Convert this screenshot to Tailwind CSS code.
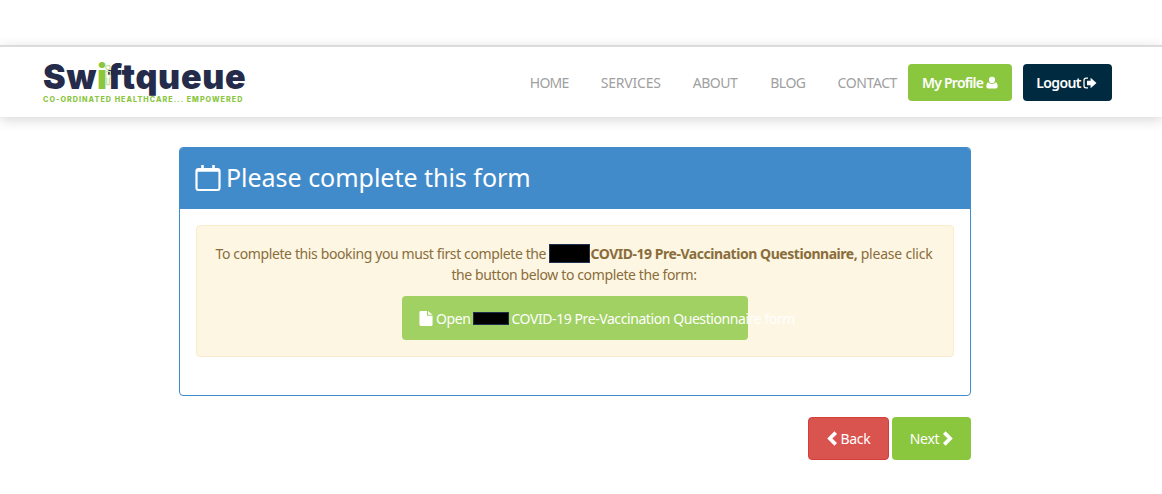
<!doctype html>
<html><head><meta charset="utf-8"><script src="https://cdn.jsdelivr.net/npm/@tailwindcss/browser@4"></script></head>
<body class="bg-white font-['Noto_Sans',sans-serif] w-[1162px] h-[494px] overflow-hidden">
<div class="h-[45px]"></div>
<header class="h-[72px] border-t-2 border-[#dcdcdf] bg-white shadow-[0_3px_12px_rgba(0,0,0,0.16)] flex items-center pl-[43px] pr-[50px] relative">
  <div class="w-[204px] shrink-0 mt-[1px]">
    <div class="flex items-baseline h-[33px] text-[#252b4a] font-['Inter',sans-serif] font-black text-[34px] leading-[33px] tracking-[0.75px]"><span>Sw</span><span class="relative text-[#8bc63f]">i<svg viewBox="0 0 8 24" class="absolute left-[8px] top-[3px] w-[7px] h-[24px]" fill="none" stroke="#c5e3a0" stroke-width="1.400"><circle cx="3.500" cy="3.500" r="2.500"/><path d="M1 8h5v8H5v7H2v-7H1z"/></svg></span><span>ftqueue</span></div>
    <div class="text-[#8bc63f] font-['Inter',sans-serif] font-extrabold text-[7.2px] leading-[10px] tracking-[1.03px] whitespace-nowrap mt-[2px]">CO-ORDINATED HEALTHCARE... EMPOWERED</div>
  </div>
  <nav class="ml-auto flex items-center text-[14px] text-[#a0a0a0] font-['Noto_Sans',sans-serif] tracking-[-0.5px] mt-[1px]">
    <a class="mr-[32px] tracking-[-0.7px]">HOME</a><a class="mr-[32px] tracking-[-0.2px]">SERVICES</a><a class="mr-[33px]">ABOUT</a><a class="mr-[32px]">BLOG</a><a class="mr-[11px] tracking-[-0.4px]">CONTACT</a>
    <a class="w-[104px] h-[37px] rounded-[4px] bg-[#8bc63f] text-white font-semibold flex items-center justify-center gap-[3px] tracking-[-0.75px]">My Profile
      <svg viewBox="0 0 14 14" class="w-[12px] h-[13px]" fill="#fff"><circle cx="7" cy="4" r="3.600"/><path d="M2.600 6.800C3.600 8 5.200 8.600 7 8.600s3.400-.6 4.400-1.800C13 7.200 13.600 9.400 13.600 11.800c0 1.400-.9 2.200-2.200 2.200H2.600C1.300 14 .4 13.200.4 11.800c0-2.400.6-4.600 2.200-5z"/></svg></a>
    <a class="ml-[11px] w-[89px] h-[37px] pr-[2px] rounded-[4px] bg-[#002a40] text-white font-semibold flex items-center justify-center gap-[2px] tracking-[-0.6px]">Logout
      <svg viewBox="0 0 14 12" class="w-[14px] h-[12px]"><path d="M5 1.200H3A2 2 0 0 0 1 3.200v5.600a2 2 0 0 0 2 2h2" fill="none" stroke="#fff" stroke-width="1.300"/><path d="M7.600.8 13.500 6 7.600 11.200V8.300H4V3.700h3.600z" fill="#fff"/></svg></a>
  </nav>
</header>
<main class="w-[792px] ml-[179px] mt-[30px]">
  <section class="h-[249px] rounded-[4px] border border-[#428bca] overflow-hidden bg-white">
    <div class="h-[61px] bg-[#428bca] text-white text-[25px] tracking-[-0.02px] flex items-center pl-[15px] gap-[5px] pb-[1px]">
      <svg viewBox="0 0 26 26" class="w-[26px] h-[26px] shrink-0" fill="none" stroke="#fff" stroke-width="2.200"><rect x="1.500" y="4" width="23" height="21" rx="2"/><path d="M7.500 0v5M18.500 0v5" stroke-width="2.600"/><path d="M1.500 5.500h23" stroke-width="2.600"/></svg>
      <span>Please complete this form</span>
    </div>
    <div class="mx-[16px] mt-[16px] h-[132px] rounded-[4px] border border-[#faebcc] bg-[#fdf6e3] pt-[17px] text-[#8a6d3b] text-[14px] leading-[21px] text-center">
      <p class="pl-[10px] pr-[12px] tracking-[-0.38px]">To complete this booking you must first complete the <span class="inline-block w-[41px] h-[19px] bg-black border border-[#1f3050] align-[-4px]"></span><b class="font-bold tracking-[-0.46px]">COVID-19 Pre-Vaccination Questionnaire,</b><span class="tracking-[-0.22px]"> please click</span> the button below to complete the form:</p>
      <div class="ml-[205px] mt-[11px] w-[346px] h-[44px] rounded-[4px] bg-[#a0d162] flex items-center pl-[17px] text-white text-[14px] whitespace-nowrap tracking-[-0.42px]">
        <svg viewBox="0 0 14 16" class="w-[14px] h-[15px] shrink-0 mr-[3px]" fill="#fff"><path d="M0 1.500A1.500 1.500 0 0 1 1.500 0H8v5h6v9.500a1.500 1.500 0 0 1-1.500 1.500h-11A1.500 1.500 0 0 1 0 14.500z"/><path d="M9.200 0 14 3.900H9.200z"/></svg>
        <span>Open</span><span class="shrink-0 block w-[36px] h-[13px] bg-black border border-[#1f3050] ml-[3px] mr-[2px]"></span><span>COVID-19 Pre-Vaccination Questionnaire form</span>
      </div>
    </div>
  </section>
  <div class="flex justify-end gap-[3px] mt-[21px]">
    <a class="w-[81px] h-[43px] rounded-[4px] bg-[#d9534f] border border-[#d43f3a] text-white text-[14px] flex items-center justify-center gap-[3px] tracking-[-0.3px]">
      <svg viewBox="0 0 10 14" class="w-[11px] h-[15px]"><path d="M8 1.500 2.500 7 8 12.500" fill="none" stroke="#fff" stroke-width="3.400"/></svg>Back</a>
    <a class="w-[79px] h-[43px] rounded-[4px] bg-[#8bc63f] text-white text-[14px] flex items-center justify-center gap-[3px] tracking-[-0.3px]">Next
      <svg viewBox="0 0 10 14" class="w-[11px] h-[15px]"><path d="M2 1.500 7.500 7 2 12.500" fill="none" stroke="#fff" stroke-width="3.400"/></svg></a>
  </div>
</main>
</body></html>
